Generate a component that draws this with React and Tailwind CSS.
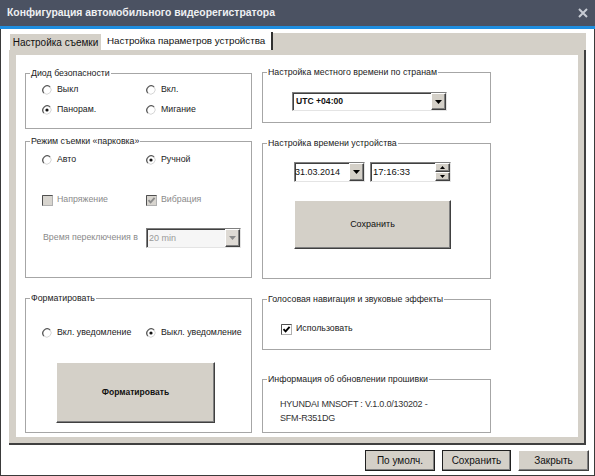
import React from "react";

const sunken =
  "border border-t-[#808080] border-l-[#808080] border-r-[#e4e4e4] border-b-[#e4e4e4] shadow-[inset_1px_1px_0_#404040]";
const raised =
  "border border-t-white border-l-white border-r-[#404040] border-b-[#404040] shadow-[inset_-1px_-1px_0_#808080]";

function Radio({ checked }) {
  return (
    <svg width="10" height="10" viewBox="0 0 10 10" className="shrink-0">
      <circle cx="5" cy="5" r="4.3" fill="#fff" />
      <path d="M8.1 1.9 A4.4 4.4 0 0 0 1.9 8.1" stroke="#5a5a5a" strokeWidth="1.3" fill="none" />
      <path d="M1.9 8.1 A4.4 4.4 0 0 0 8.1 1.9" stroke="#d6d6d6" strokeWidth="1" fill="none" />
      {checked && <circle cx="5" cy="5" r="1.6" fill="#111" />}
    </svg>
  );
}

function Check({ checked, disabled }) {
  return (
    <svg width="11" height="11" viewBox="0 0 11 11" className="shrink-0">
      <rect x="0.5" y="0.5" width="10" height="10" fill={disabled ? "#d8d5cf" : "#fff"} stroke="#b0b0b0" />
      <path d="M0.5 10.5 V0.5 H10.5" stroke="#505050" fill="none" />
      {checked && (
        <path
          d="M2.5 5.2 L4.6 7.4 L8.6 2.8"
          stroke={disabled ? "#8c8c8c" : "#000"}
          strokeWidth="1.9"
          fill="none"
        />
      )}
    </svg>
  );
}

function DropBtn({ disabled }) {
  return (
    <div className={`w-[15px] h-full flex items-center justify-center ${disabled ? "bg-[#dedad4]" : "bg-[#d4d0c8]"} ${raised}`}>
      <svg width="7" height="4" viewBox="0 0 7 4">
        <path d="M0 0h7L3.5 4z" fill={disabled ? "#8a8a8a" : "#000"} />
      </svg>
    </div>
  );
}

function Group({ title, className, children }) {
  return (
    <fieldset className={`border border-[#a6a6a6] ${className}`}>
      <legend className="ml-[4px] px-[1px] text-[8.8px] leading-[12px] text-[#222]">{title}</legend>
      {children}
    </fieldset>
  );
}

function Opt({ checked, label, disabled }) {
  return (
    <div className={`flex items-center gap-[5px] h-[14px] text-[8.8px] ${disabled ? "text-[#8a8a8a]" : "text-[#222]"}`}>
      <Radio checked={checked} />
      <span>{label}</span>
    </div>
  );
}

function Box({ checked, label, disabled }) {
  return (
    <div className={`flex items-center gap-[4px] h-[14px] text-[8.8px] ${disabled ? "text-[#8a8a8a]" : "text-[#222]"}`}>
      <Check checked={checked} disabled={disabled} />
      <span>{label}</span>
    </div>
  );
}

export default function App() {
  return (
    <div className="w-[595px] h-[476px] flex flex-col bg-white font-['Liberation_Sans',Arial,sans-serif]">
      {/* title bar */}
      <div className="h-[29px] shrink-0 bg-[#4b5262] border-b-[3px] border-[#1f8ee0] flex items-center justify-between pl-[7px] pr-[7px]">
        <span className="text-[10.4px] font-bold text-[#eef0f3]">
          Конфигурация автомобильного видеорегистратора
        </span>
        <svg width="10" height="10" viewBox="0 0 10 10">
          <path d="M1 1L9 9M9 1L1 9" stroke="#c8ccd4" strokeWidth="2" />
        </svg>
      </div>

      <div className="flex-1 flex flex-col border-x border-b border-[#3a3a3a] pt-[4px] pl-[8px]">
        {/* tabs */}
        <div className="w-[577px] h-[17px] bg-[#d4d0c8] flex items-end">
          <div className="w-[92px] h-[17px] flex items-center justify-center text-[10px] text-[#111] border-l border-t border-white">
            Настройка съемки
          </div>
          <div className="w-[172px] h-[18px] bg-white flex items-center pl-[6px] text-[9.8px] text-[#111] border-r-2 border-[#303030]">
            Настройка параметров устройства
          </div>
        </div>

        {/* panel */}
        <div className="w-[577px] h-[395px] bg-[#d4d0c8] pt-[5px] pl-[7px] pr-[6px] pb-[6px] border-r-2 border-b-2 border-[#404040]">
          <div className="w-[562px] h-[382px] bg-white flex gap-[10px] pl-[9px]">
            {/* left column */}
            <div className="w-[227px] flex flex-col">
              <Group title="Диод безопасности" className="mt-[12px] h-[62px]">
                <div className="grid grid-cols-[104px_1fr] gap-y-[6px] pl-[16px] mt-[4px]">
                  <Opt label="Выкл" />
                  <Opt label="Вкл." />
                  <Opt label="Панорам." checked />
                  <Opt label="Мигание" />
                </div>
              </Group>

              <Group title="Режим съемки «парковка»" className="mt-[6px] h-[143px]">
                <div className="grid grid-cols-[104px_1fr] pl-[16px] mt-[6px]">
                  <Opt label="Авто" />
                  <Opt label="Ручной" checked />
                  <div className="mt-[26px]">
                    <Box label="Напряжение" disabled />
                  </div>
                  <div className="mt-[26px]">
                    <Box label="Вибрация" checked disabled />
                  </div>
                  <div className="mt-[21px] h-[20px] flex items-center text-[8.8px] text-[#8a8a8a] pl-[1px]">
                    Время переключения в
                  </div>
                  <div className={`mt-[21px] w-[95px] h-[20px] flex bg-[#f6f6f6] ${sunken}`}>
                    <span className="flex-1 text-[9px] text-[#9a9a9a] leading-[18px] pl-[2px]">20 min</span>
                    <DropBtn disabled />
                  </div>
                </div>
              </Group>

              <Group title="Форматировать" className="mt-[14px] h-[141px]">
                <div className="grid grid-cols-[104px_1fr] pl-[16px] mt-[22px]">
                  <Opt label="Вкл. уведомление" />
                  <Opt label="Выкл. уведомление" checked />
                </div>
                <button className={`ml-[30px] mt-[22px] w-[159px] h-[61px] bg-[#d4d0c8] text-[8.5px] font-bold text-[#111] ${raised}`}>
                  Форматировать
                </button>
              </Group>
            </div>

            {/* right column */}
            <div className="w-[229px] flex flex-col">
              <Group title="Настройка местного времени по странам" className="mt-[11px] h-[57px]">
                <div className={`ml-[29px] mt-[14px] w-[155px] h-[19px] flex bg-white ${sunken}`}>
                  <span className="flex-1 text-[8.6px] font-bold text-[#111] leading-[17px] pl-[3px]">UTC +04:00</span>
                  <DropBtn />
                </div>
              </Group>

              <Group title="Настройка времени устройства" className="mt-[14px] h-[142px]">
                <div className="ml-[31px] mt-[13px] flex gap-[5px]">
                  <div className={`w-[71px] h-[20px] flex bg-white ${sunken}`}>
                    <span className="flex-1 text-[9px] text-[#111] leading-[18px]">31.03.2014</span>
                    <DropBtn />
                  </div>
                  <div className={`w-[81px] h-[20px] flex bg-white ${sunken}`}>
                    <span className="flex-1 text-[9.5px] text-[#111] leading-[18px] pl-[2px]">17:16:33</span>
                    <div className="w-[15px] h-full flex flex-col">
                      <div className={`flex-1 flex items-center justify-center bg-[#d4d0c8] ${raised}`}>
                        <svg width="5" height="3" viewBox="0 0 5 3"><path d="M0 3h5L2.5 0z" fill="#000" /></svg>
                      </div>
                      <div className={`flex-1 flex items-center justify-center bg-[#d4d0c8] ${raised}`}>
                        <svg width="5" height="3" viewBox="0 0 5 3"><path d="M0 0h5L2.5 3z" fill="#000" /></svg>
                      </div>
                    </div>
                  </div>
                </div>
                <button className={`ml-[31px] mt-[18px] w-[157px] h-[49px] bg-[#d4d0c8] text-[9px] text-[#111] ${raised}`}>
                  Сохранить
                </button>
              </Group>

              <Group title="Голосовая навигация и звуковые эффекты" className="mt-[14px] h-[57px]">
                <div className="ml-[18px] mt-[17px]">
                  <Box label="Использовать" checked />
                </div>
              </Group>

              <Group title="Информация об обновлении прошивки" className="mt-[23px] h-[60px]">
                <div className="ml-[17px] mt-[12px] text-[9px] tracking-[-0.2px] leading-[14px] text-[#333]">
                  <div>HYUNDAI MNSOFT : V.1.0.0/130202 -</div>
                  <div>SFM-R351DG</div>
                </div>
              </Group>
            </div>
          </div>
        </div>

        {/* bottom buttons */}
        <div className="flex justify-end gap-[7px] pr-[5px] mt-[5px]">
          <button className={`w-[70px] h-[21px] bg-[#d4d0c8] text-[10px] text-[#111] outline outline-1 outline-[#202020] -outline-offset-1 ${raised}`}>
            По умолч.
          </button>
          <button className={`w-[69px] h-[21px] bg-[#d4d0c8] text-[10px] text-[#111] outline outline-1 outline-[#202020] -outline-offset-1 ${raised}`}>
            Сохранить
          </button>
          <button className={`w-[71px] h-[21px] bg-[#d4d0c8] text-[10px] text-[#111] ${raised}`}>
            Закрыть
          </button>
        </div>
      </div>
    </div>
  );
}
